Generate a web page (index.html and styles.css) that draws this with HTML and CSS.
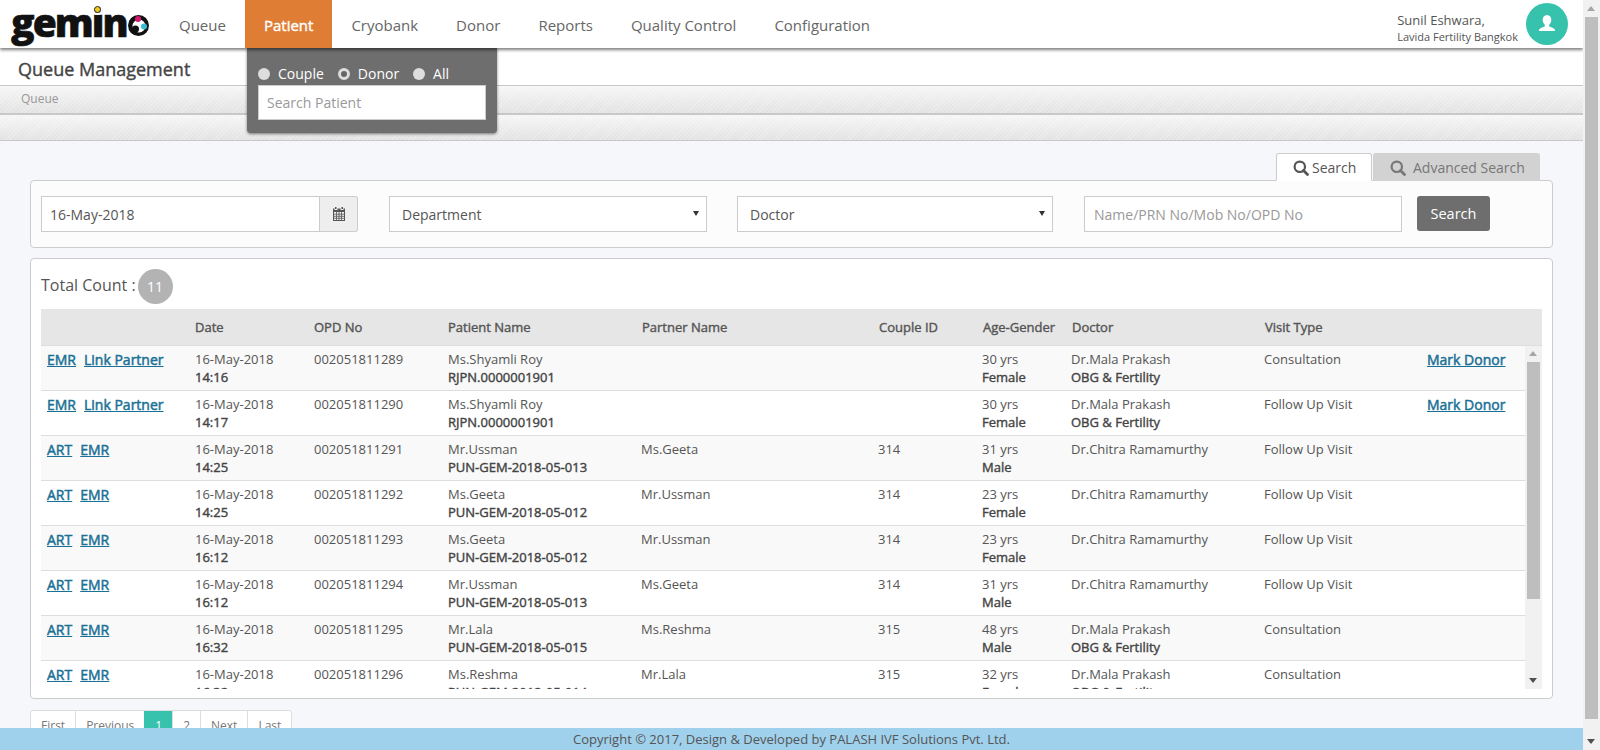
FILE: index.html

```html
<!DOCTYPE html>
<html lang="en">
<head>
  <meta charset="UTF-8" />
  <title>Queue Management</title>
  <link rel="stylesheet" href="styles.css">
</head>
<body>
<div class="page">
  <header class="topbar">
    <div class="logo">
      <span class="logo-word">gemin</span>
      <svg class="logo-o" width="21" height="21" viewBox="0 0 21 21">
        <circle cx="10.500" cy="10.500" r="10.500" fill="#111"/>
        <circle cx="11" cy="11" r="6.500" fill="#fff"/>
        <circle cx="7.500" cy="14" r="3.500" fill="#111"/>
        <circle cx="10" cy="4" r="3" fill="#d5176e"/>
        <circle cx="16" cy="11.500" r="3" fill="#37bcd8"/>
      </svg>
      <i class="logo-dot"></i>
    </div>
    <nav class="nav">
      <a>Queue</a>
      <a class="active">Patient</a>
      <a>Cryobank</a>
      <a>Donor</a>
      <a>Reports</a>
      <a>Quality Control</a>
      <a>Configuration</a>
    </nav>
    <div class="user">
      <div class="user-text">
        <div class="user-name">Sunil Eshwara,</div>
        <div class="user-clinic">Lavida Fertility Bangkok</div>
      </div>
      <div class="avatar">
        <svg width="20" height="20" viewBox="0 0 20 20"><path fill="#fff" d="M10 1c2.900 0 4.300 2.200 4.300 4.800 0 2.200-1 4-2.100 5v1.600c2.200 1 5.800 1.700 5.800 3.600v1H2v-1c0-1.900 3.600-2.600 5.800-3.600v-1.600c-1.100-1-2.100-2.800-2.100-5C5.700 3.200 7.100 1 10 1z"/></svg>
      </div>
    </div>
  </header>

  <div class="patient-menu">
    <div class="radios">
      <span class="radio"></span><span class="radio-label">Couple</span>
      <span class="radio checked"></span><span class="radio-label">Donor</span>
      <span class="radio"></span><span class="radio-label">All</span>
    </div>
    <div class="patient-search">Search Patient</div>
  </div>

  <div class="title-bar">Queue Management</div>
  <div class="strip crumb">Queue</div>
  <div class="strip empty"></div>

  <main class="content">
    <div class="tabs">
      <div class="tab on">
        <svg width="16" height="16" viewBox="0 0 16 16"><circle cx="6.800" cy="6.800" r="5.200" fill="none" stroke="#555" stroke-width="2.200"/><path d="M10.500 10.500l4 4" stroke="#555" stroke-width="2.800" stroke-linecap="round"/></svg>
        Search
      </div>
      <div class="tab off">
        <svg width="16" height="16" viewBox="0 0 16 16"><circle cx="6.800" cy="6.800" r="5.200" fill="none" stroke="#777" stroke-width="2.200"/><path d="M10.500 10.500l4 4" stroke="#777" stroke-width="2.800" stroke-linecap="round"/></svg>
        Advanced Search
      </div>
    </div>

    <section class="panel search-panel">
      <div class="date-group">
        <div class="field date-field">16-May-2018</div>
        <div class="date-addon">
          <svg width="14" height="14" viewBox="0 0 14 14"><path fill="#555" d="M3 0h1.500v2H3zM9.500 0H11v2H9.500zM1 1.500h1.500v1.500h3V1.500h3v1.500h3V1.500H13v12.500H1zM2 5v8h10V5z"/><path stroke="#555" stroke-width=".8" d="M2 7.200h10M2 9.300h10M2 11.300h10M4.500 5v8M7 5v8M9.500 5v8"/></svg>
        </div>
      </div>
      <div class="field select dept">Department<i class="caret"></i></div>
      <div class="field select doctor">Doctor<i class="caret"></i></div>
      <div class="field name-field">Name/PRN No/Mob No/OPD No</div>
      <button class="search-btn">Search</button>
    </section>

    <section class="panel results">
      <div class="total"><span class="total-label">Total Count :</span> <span class="badge">11</span></div>
      <div class="row head">
        <div></div><div>Date</div><div>OPD No</div><div>Patient Name</div><div>Partner Name</div><div>Couple ID</div><div>Age-Gender</div><div>Doctor</div><div>Visit Type</div><div></div>
      </div>
      <div class="table-wrap">
        <div class="rows">
          <div class="row">
            <div class="links"><a>EMR</a><a>Link Partner</a></div>
            <div>16-May-2018<b>14:16</b></div><div>002051811289</div>
            <div>Ms.Shyamli Roy<b>RJPN.0000001901</b></div><div></div><div></div>
            <div>30 yrs<b>Female</b></div><div>Dr.Mala Prakash<b>OBG &amp; Fertility</b></div>
            <div>Consultation</div><div class="links"><a>Mark Donor</a></div>
          </div>
          <div class="row">
            <div class="links"><a>EMR</a><a>Link Partner</a></div>
            <div>16-May-2018<b>14:17</b></div><div>002051811290</div>
            <div>Ms.Shyamli Roy<b>RJPN.0000001901</b></div><div></div><div></div>
            <div>30 yrs<b>Female</b></div><div>Dr.Mala Prakash<b>OBG &amp; Fertility</b></div>
            <div>Follow Up Visit</div><div class="links"><a>Mark Donor</a></div>
          </div>
          <div class="row">
            <div class="links"><a>ART</a><a>EMR</a></div>
            <div>16-May-2018<b>14:25</b></div><div>002051811291</div>
            <div>Mr.Ussman<b>PUN-GEM-2018-05-013</b></div><div>Ms.Geeta</div><div>314</div>
            <div>31 yrs<b>Male</b></div><div>Dr.Chitra Ramamurthy</div>
            <div>Follow Up Visit</div><div></div>
          </div>
          <div class="row">
            <div class="links"><a>ART</a><a>EMR</a></div>
            <div>16-May-2018<b>14:25</b></div><div>002051811292</div>
            <div>Ms.Geeta<b>PUN-GEM-2018-05-012</b></div><div>Mr.Ussman</div><div>314</div>
            <div>23 yrs<b>Female</b></div><div>Dr.Chitra Ramamurthy</div>
            <div>Follow Up Visit</div><div></div>
          </div>
          <div class="row">
            <div class="links"><a>ART</a><a>EMR</a></div>
            <div>16-May-2018<b>16:12</b></div><div>002051811293</div>
            <div>Ms.Geeta<b>PUN-GEM-2018-05-012</b></div><div>Mr.Ussman</div><div>314</div>
            <div>23 yrs<b>Female</b></div><div>Dr.Chitra Ramamurthy</div>
            <div>Follow Up Visit</div><div></div>
          </div>
          <div class="row">
            <div class="links"><a>ART</a><a>EMR</a></div>
            <div>16-May-2018<b>16:12</b></div><div>002051811294</div>
            <div>Mr.Ussman<b>PUN-GEM-2018-05-013</b></div><div>Ms.Geeta</div><div>314</div>
            <div>31 yrs<b>Male</b></div><div>Dr.Chitra Ramamurthy</div>
            <div>Follow Up Visit</div><div></div>
          </div>
          <div class="row">
            <div class="links"><a>ART</a><a>EMR</a></div>
            <div>16-May-2018<b>16:32</b></div><div>002051811295</div>
            <div>Mr.Lala<b>PUN-GEM-2018-05-015</b></div><div>Ms.Reshma</div><div>315</div>
            <div>48 yrs<b>Male</b></div><div>Dr.Mala Prakash<b>OBG &amp; Fertility</b></div>
            <div>Consultation</div><div></div>
          </div>
          <div class="row">
            <div class="links"><a>ART</a><a>EMR</a></div>
            <div>16-May-2018<b>16:32</b></div><div>002051811296</div>
            <div>Ms.Reshma<b>PUN-GEM-2018-05-014</b></div><div>Mr.Lala</div><div>315</div>
            <div>32 yrs<b>Female</b></div><div>Dr.Mala Prakash<b>OBG &amp; Fertility</b></div>
            <div>Consultation</div><div></div>
          </div>
        </div>
        <div class="bar inner-bar">
          <i class="arrow up"></i>
          <div class="thumb"></div>
          <i class="arrow down"></i>
        </div>
      </div>
    </section>

    <div class="pager">
      <a>First</a><a>Previous</a><a class="current">1</a><a>2</a><a>Next</a><a>Last</a>
    </div>
  </main>
  <footer class="footer">Copyright © 2017, Design &amp; Developed by PALASH IVF Solutions Pvt. Ltd.</footer>
</div>
<div class="bar page-bar">
  <i class="arrow up"></i>
  <div class="thumb"></div>
  <i class="arrow down"></i>
</div>
</body>
</html>
```

FILE: styles.css

```css
html, body { margin: 0; height: 750px; overflow: hidden; }
body { display: flex; font-family: "Open Sans", sans-serif; font-size: 13px; color: #555; background: #f5f7fb; }
.page { position: relative; width: 1583px; height: 750px; overflow: hidden; }

/* top bar */
.topbar { position: relative; z-index: 3; display: flex; height: 48px; background: #fff; box-shadow: 0 2px 3px rgba(0,0,0,.5); }
.logo { position: relative; display: flex; align-items: center; width: 160px; padding-left: 11px; box-sizing: border-box; }
.logo-word { font-size: 39px; font-weight: 800; letter-spacing: -2px; line-height: 48px; color: #111; margin-top: -4px; -webkit-text-stroke: .6px #111; }
.logo-o { flex: none; margin: 3px 0 0 1px; }
.logo-dot { position: absolute; left: 94px; top: 6px; box-sizing: border-box; width: 7px; height: 7px; border-radius: 50%; background: #f2c81e; border: 1px solid #333; outline: 2px solid #fff; }
.nav { display: flex; }
.nav a { padding: 0 19px; font-size: 15px; line-height: 50px; color: #666; }
.nav a.active { background: #e07d35; color: #fff; -webkit-text-stroke: .4px #fff; }
.user { display: flex; margin-left: auto; padding: 3px 15px 0 0; }
.user-text { padding: 8px 8px 0 0; color: #555; }
.user-name { font-size: 13px; line-height: 18px; }
.user-clinic { font-size: 11px; line-height: 16px; }
.avatar { display: flex; align-items: center; justify-content: center; width: 42px; height: 42px; border-radius: 50%; background: #36c2ac; }

/* patient dropdown */
.patient-menu { position: absolute; z-index: 2; left: 247px; top: 48px; width: 228px; height: 85px; padding: 0 11px; background: #6e6e6e; border-radius: 0 0 4px 4px; box-shadow: 0 1px 3px rgba(0,0,0,.5); }
.radios { display: flex; align-items: center; height: 37px; padding-top: 14px; box-sizing: border-box; color: #fff; font-size: 14px; }
.radio { width: 12px; height: 12px; border-radius: 50%; background: #ddd; }
.radio.checked { width: 6px; height: 6px; background: #666; border: 3px solid #ddd; }
.radio-label { margin: 0 14px 0 8px; }
.patient-search { height: 33px; line-height: 33px; padding-left: 8px; background: #fff; border: 1px solid #ccc; color: #999; font-size: 14px; }

/* title strips */
.title-bar { height: 37px; padding-left: 18px; background: #fff; line-height: 42px; font-size: 18px; color: #444; -webkit-text-stroke: .4px #444; }
.strip { box-sizing: border-box; background: repeating-linear-gradient(135deg, rgba(255,255,255,.25) 0 1px, transparent 1px 3px), linear-gradient(#f6f6f6, #e2e2e2); border-top: 1px solid #c8c8c8; }
.crumb { height: 28px; padding-left: 21px; line-height: 25px; font-size: 12px; color: #999; }
.empty { height: 28px; border-top: 2px solid #c8c8c8; border-bottom: 1px solid #c8c8c8; }

/* main */
.content { padding: 12px 30px 0; }
.tabs { display: flex; justify-content: flex-end; gap: 1px; padding-right: 13px; margin-bottom: -1px; position: relative; }
.tab { display: flex; align-items: center; gap: 3px; box-sizing: border-box; height: 28px; padding-top: 1px; font-size: 14px; border-radius: 3px 3px 0 0; }
.tab.on { width: 96px; padding-left: 16px; background: #fff; border: 1px solid #ccc; border-bottom: 1px solid #fff; position: relative; z-index: 1; }
.tab.off { width: 167px; padding-left: 17px; gap: 7px; background: #d2d2d2; color: #777; }
.panel { background: #fcfcfc; border: 1px solid #ccc; border-radius: 4px; }
.search-panel { display: flex; box-sizing: border-box; height: 68px; padding: 15px 10px 0; }
.field { box-sizing: border-box; height: 36px; line-height: 35px; background: #fff; border: 1px solid #ccc; font-size: 14px; }
.date-group { display: flex; width: 317px; height: 36px; margin-right: 31px; }
.date-field { width: 279px; padding-left: 8px; }
.date-addon { display: flex; align-items: center; justify-content: center; width: 38px; box-sizing: border-box; background: #eee; border: 1px solid #ccc; border-left: 0; border-radius: 0 3px 3px 0; }
.select { position: relative; padding-left: 12px; }
.dept { width: 318px; margin-right: 30px; }
.doctor { width: 316px; margin-right: 31px; padding-left: 12px; }
.caret { position: absolute; right: 7px; top: 14px; border: 3.500px solid transparent; border-top: 5px solid #333; }
.name-field { width: 318px; margin-right: 15px; padding-left: 9px; color: #999; }
.search-btn { width: 73px; height: 35px; padding: 0; border: 0; border-radius: 3px; background: #6e6e6e; color: #fff; font: 14.500px "Open Sans", sans-serif; }

/* results */
.results { box-sizing: border-box; height: 441px; margin-top: 10px; padding: 0 10px; background: #fff; }
.total { display: flex; align-items: center; height: 50px; padding-top: 5px; box-sizing: border-box; gap: 2px; font-size: 16px; }
.total-label { margin-top: -4px; }
.badge { display: flex; align-items: center; justify-content: center; width: 35px; height: 35px; border-radius: 50%; background: #b3b3b3; color: #fff; font-size: 14px; }
.row { display: grid; grid-template-columns: 154px 119px 134px 194px 237px 104px 89px 193px 160px 117px; box-sizing: border-box; height: 45px; padding-top: 4px; line-height: 18px; background: #fff; border-bottom: 1px solid #ddd; }
.row > div { white-space: nowrap; }
.row b { display: block; font-weight: 400; color: #444; -webkit-text-stroke: .4px #444; }
.row.head { height: 37px; padding-top: 0; line-height: 36px; background: #e6e6e6; color: #555; -webkit-text-stroke: .4px #555; }
.table-wrap { display: flex; height: 343px; overflow: hidden; }
.rows { width: 1484px; }
.rows .row { grid-template-columns: 154px 119px 134px 193px 237px 104px 89px 193px 157px 104px; }
.rows .row:nth-child(odd) { background: #f9f9f9; }
.links { padding: 1px 0 0 6px; }
.links a { margin-right: 8px; font-size: 14px; color: #1a7195; text-decoration: underline; -webkit-text-stroke: .5px #1a7195; }
.pager { display: flex; margin-top: 11px; height: 40px; width: max-content; background: #fff; border: 1px solid #ddd; border-radius: 3px; }
.pager a { padding: 0 10px; line-height: 30px; font-size: 12px; color: #777; border-left: 1px solid #ddd; }
.pager a:first-child { border-left: 0; }
.pager a.current { background: #36c2ac; color: #fff; border-color: #36c2ac; }
.footer { position: absolute; left: 0; right: 0; bottom: 0; height: 22px; line-height: 22px; text-align: center; background: #9fd0ec; color: #555; font-size: 13px; }

/* scrollbars */
.bar { position: relative; box-sizing: border-box; width: 17px; background: #f1f1f1; }
.thumb { position: absolute; left: 2px; width: 13px; background: #bebebe; }
.arrow { position: absolute; left: 4px; border: 4px solid transparent; }
.arrow.up { border-bottom: 5px solid #a6a6a6; border-top: 0; top: 6px; }
.arrow.down { bottom: 6px; border-top: 5px solid #505050; border-bottom: 0; }
.page-bar { height: 750px; }
.page-bar .thumb { top: 17px; height: 702px; }
.inner-bar { height: 343px; }
.inner-bar .thumb { top: 16px; height: 237px; }
.inner-bar .arrow.up { top: 5px; }
```
